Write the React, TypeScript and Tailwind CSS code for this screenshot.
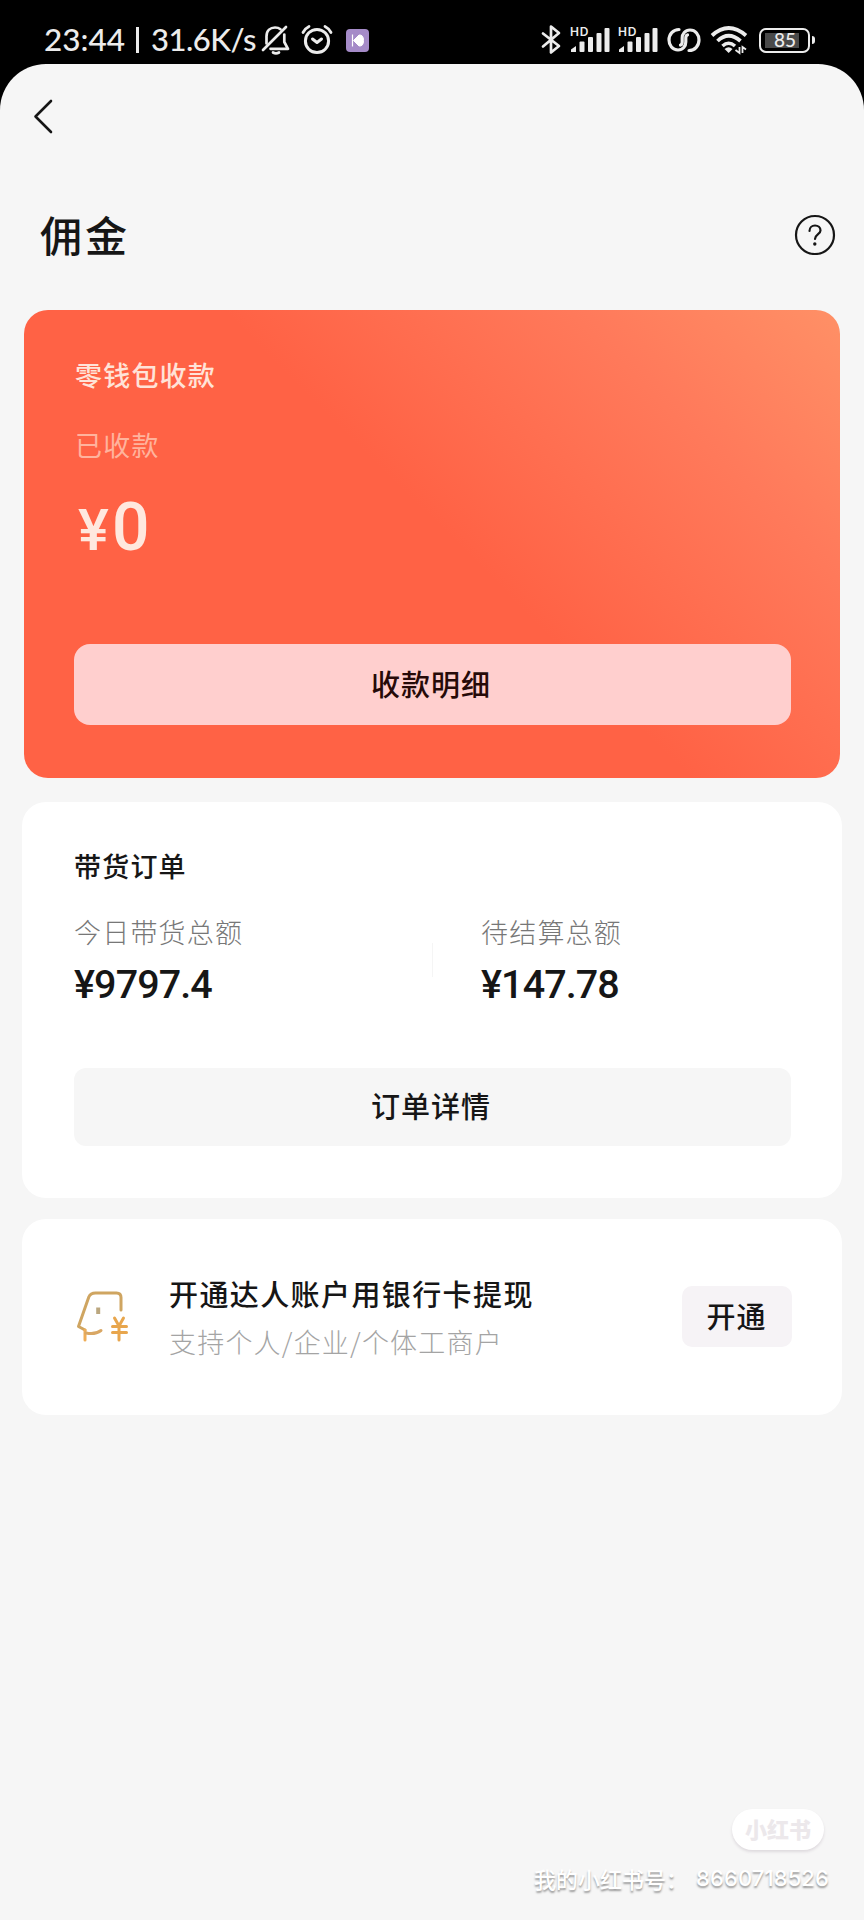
import type { ReactNode } from 'react';

const stats = [
  { label: '今日带货总额', value: '¥9797.4' },
  { label: '待结算总额', value: '¥147.78' },
];

function Signal() {
  return (
    <svg width="40" height="30" viewBox="0 0 40 30" fill="#ececec">
      <text x="0" y="10.5" fontSize="12" fontWeight="600" fontFamily="Inter, sans-serif" textLength="18.500">HD</text>
      <path d="M1 27V24.500L6 21V27Z" />
      <rect x="9.5" y="16.5" width="5" height="10.5" rx="1" />
      <rect x="18" y="12" width="5" height="15" rx="1" />
      <rect x="26.5" y="8" width="5" height="19" rx="1" />
      <rect x="34.5" y="3" width="5" height="24" rx="1" />
    </svg>
  );
}

function StatusBar() {
  return (
    <header className="flex h-16 items-start justify-between pt-6 pr-[49px] pl-11 text-[#ececec]">
      <div className="flex h-8 items-center">
        <span className="w-[79px] pb-[2px] font-['Lato',sans-serif] text-[31.5px] leading-8 font-medium">23:44</span>
        <span className="mr-[12px] ml-[13px] h-[26px] w-[3px] bg-[#ececec]" />
        <span className="w-[109px] pb-[2px] font-['Lato',sans-serif] text-[31px] leading-8 font-medium tracking-[-0.500px] whitespace-nowrap">31.6K/s</span>
        <svg width="30" height="32" viewBox="0 0 30 32" className="ml-[1px]" fill="none" stroke="#ececec" strokeWidth="2.7" strokeLinecap="round" strokeLinejoin="round">
          <path d="M2 26 25 3" />
          <path d="M5.5 19.5V12.5C5.5 6.5 9.5 3.5 14 3.5C16 3.5 18 4 19.5 5.2" />
          <path d="M23.3 10.5V18L27 24.8H9.5" />
          <path d="M12 28.5Q15 30.3 18 28.5" />
        </svg>
        <svg className="ml-[10px]" width="32" height="32" viewBox="0 0 32 32" fill="none" stroke="#ececec" strokeWidth="3" strokeLinecap="round" strokeLinejoin="round">
          <circle cx="16" cy="17" r="11.6" />
          <path d="M11.5 15 16 18.5 20.5 15" />
          <path d="M2 8.500Q4 4.500 8 2.500M24 2.500Q28 4.500 30 8.500" strokeWidth="2.8" />
        </svg>
        <svg className="ml-[13px]" width="23" height="23" viewBox="0 0 23 23">
          <rect width="23" height="23" rx="4" fill="#a58bc8" />
          <path d="M7.500 11.500 13 6Q17.500 5.500 17.500 11.500T13 17Z" fill="#fff" stroke="#fff" strokeLinejoin="round" />
          <path d="M6.500 5.500V17.500" stroke="#fff" strokeWidth="1.2" />
        </svg>
      </div>
      <div className="flex h-8 items-center">
        <svg width="22" height="32" viewBox="0 0 22 32" fill="none" stroke="#ececec" strokeWidth="2.7" strokeLinejoin="round" strokeLinecap="round">
          <path d="M3 9.500 19 22 11 28.500V2.500L19 9 3 22.500" />
        </svg>
        <div className="ml-[8px] flex gap-2">
          <Signal />
          <Signal />
        </div>
        <svg className="ml-[9px]" width="34" height="26" viewBox="0 0 34 26" fill="none" stroke="#ececec" strokeWidth="3.2" strokeLinecap="round">
          <path d="M12 2.500C6 2.500 2 7.500 2 13S5.500 23 11 23C16 23 18.800 19 18.800 15V11Q18.800 8.500 20.500 8" />
          <path d="M22 23.500C28 23.500 32 18.500 32 13S28.500 3 23 3C18 3 15.200 7 15.200 11V15Q15.200 17.500 13.500 18" />
        </svg>
        <svg className="ml-[9px]" width="38" height="30" viewBox="0 0 38 30" fill="none" stroke="#ececec">
          <path d="M2 10.500Q18.500 -4.500 36 10.500" strokeWidth="3.800" />
          <path d="M7.500 16Q18.500 5.500 30.500 16" strokeWidth="3.800" />
          <path d="M12.500 21Q18.500 15.500 25 21" strokeWidth="3.600" />
          <path d="M14.500 24Q18.700 20.500 22.500 24L18.700 28Z" fill="#ececec" stroke="none" />
          <path d="M25.500 25 29.500 28V22M36 24.500 32.500 22V28" strokeWidth="1.800" />
        </svg>
        <div className="ml-[11px] flex items-center gap-0.5">
          <div className="flex h-[25px] w-[51px] items-center rounded-[7px] border-2 border-[#ececec] pl-1">
            <div className="flex h-[15px] w-[34px] items-center justify-end bg-[#4a4a4a] pr-[3px] pb-[2px] font-['Lato',sans-serif] text-[19px] leading-none font-medium">
              85
            </div>
          </div>
          <span className="h-2 w-[3px] rounded-r bg-[#ececec]" />
        </div>
      </div>
    </header>
  );
}

function AccountIcon() {
  return (
    <svg width="53" height="52" viewBox="0 0 53 52" fill="none" strokeWidth="3" strokeLinecap="round" strokeLinejoin="round">
      <path d="M45 20V7.500Q45 3 40.500 3H19.500Q14.500 3 12.800 7L2.500 36.500 9 40" stroke="#cfa561" />
      <path d="M9 40V50" stroke="#efad57" />
      <path d="M10 43Q19 45 25 40.500" stroke="#d9a764" />
      <path d="M22.200 17.500V24" stroke="#bba77f" strokeWidth="4" strokeLinecap="butt" />
      <path d="M38.500 28 43 36 47.500 28M43 36V50M36.500 36.500H50.500M36.500 42.500H50.500" stroke="#e8a64d" strokeWidth="3" />
    </svg>
  );
}

function Card({ className, children }: { className: string; children: ReactNode }) {
  return <section className={`mx-[22px] rounded-[24px] bg-white ${className}`}>{children}</section>;
}

export default function App() {
  return (
    <main className="h-[1920px] w-[864px] overflow-hidden bg-black font-['Noto_Sans_CJK_SC',sans-serif] text-[#161616]">
      <StatusBar />
      <div className="flex h-[1856px] flex-col rounded-t-[46px] bg-[#f6f6f6]">
        <nav className="px-[33px] pt-[35px]">
          <svg width="20" height="35" viewBox="0 0 20 35" fill="none" stroke="#161616" strokeWidth="2.600" strokeLinecap="round" strokeLinejoin="round">
            <path d="M18 2 2.500 17.500 18 33" />
          </svg>
        </nav>

        <div className="mt-[70px] flex h-[60px] items-center justify-between pr-[28px] pl-[40px]">
          <h1 className="text-[42px] leading-[60px] font-medium tracking-[3px]">佣金</h1>
          <svg width="42" height="42" viewBox="0 0 42 42" fill="none" stroke="#161616" strokeWidth="2.200" strokeLinecap="round">
            <circle cx="21" cy="22" r="19" />
            <path d="M15.500 18C15.500 14.500 18 12.500 21 12.500S26.500 14.500 26.500 17.500C26.500 21 21 21.300 21 26" />
            <circle cx="20.800" cy="31" r="1.700" fill="#161616" stroke="none" />
          </svg>
        </div>

        <section className="mx-[24px] mt-[46px] h-[468px] rounded-[24px] bg-[linear-gradient(225deg,#ff9066_0%,#ff7a5b_20%,#ff6245_48%)] px-[50px] pt-[45px]">
          <h2 className="pl-px text-[27px] leading-10 font-medium tracking-[1.200px] text-[#ffe3d8]">零钱包收款</h2>
          <p className="mt-[30px] pl-px text-[27px] leading-10 tracking-[1.200px] text-[#ffb39d]">已收款</p>
          <p className="mt-[20px] pl-[4px] font-['Roboto',sans-serif] text-[66px] leading-[86px] font-medium text-[#ffe8df]">
            <span className="inline-block w-[34px] text-[58px] leading-[60px]">¥</span>0
          </p>
          <button className="mt-[73px] block h-[81px] w-[717px] rounded-[16px] bg-[#ffcfce] pr-[3px] pb-[2px] text-[29px] font-medium tracking-[1px] text-[#260a08]">
            收款明细
          </button>
        </section>

        <Card className="mt-[24px] h-[396px] px-[52px] pt-[44px]">
          <h2 className="text-[27px] leading-10 font-medium tracking-[1.200px]">带货订单</h2>
          <div className="mt-[26px] flex">
            {stats.map((item, i) => (
              <div key={item.label} className={i === 0 ? 'w-[358px]' : 'relative pl-[49px]'}>
                {i > 0 && <span className="absolute top-[31px] left-0 h-[34px] w-px bg-[#f5f5f5]" />}
                <p className="text-[27px] leading-10 font-light tracking-[1.200px] text-[#777]">{item.label}</p>
                <p className="pt-px font-['Roboto',sans-serif] text-[39.5px] leading-[64px] font-medium tracking-[-0.900px]">{item.value}</p>
              </div>
            ))}
          </div>
          <button className="mt-[51px] block h-[78px] w-[717px] rounded-[12px] bg-[#f6f6f6] pr-[3px] pb-[2px] text-[29px] font-medium tracking-[1px]">
            订单详情
          </button>
        </Card>

        <Card className="mt-[21px] flex h-[196px] items-start pr-[50px] pl-[54px]">
          <div className="mt-[71px]">
            <AccountIcon />
          </div>
          <div className="mt-[52px] ml-[40px] flex-1">
            <h3 className="text-[29px] leading-[44px] font-medium tracking-[1.400px]">开通达人账户用银行卡提现</h3>
            <p className="mt-[5px] text-[27px] leading-[44px] font-light tracking-[1.200px] text-[#a4a4a4]">支持个人/企业/个体工商户</p>
          </div>
          <button className="mt-[67px] h-[61px] w-[110px] rounded-[10px] bg-[#f6f3f6] pr-px pb-[2px] text-[29px] font-medium tracking-[1px]">
            开通
          </button>
        </Card>

        <footer className="mt-auto flex flex-col items-end pb-[22px]">
          <div className="mr-[40px] flex h-[41px] w-[92px] items-center justify-center rounded-full bg-white pb-[2px] text-[22px] font-black text-[#ece8eb] shadow-[0_2px_3px_#dedade]">
            小红书
          </div>
          <p className="mt-[8px] mr-[35px] flex h-[40px] items-center text-[22px] font-medium whitespace-nowrap text-white [text-shadow:0_2px_2px_#999]">
            <span className="w-[162px]">我的小红书号：</span>
            <span className="font-['Inter',sans-serif] text-[22px] tracking-[0.100px]">8660718526</span>
          </p>
        </footer>
      </div>
    </main>
  );
}
